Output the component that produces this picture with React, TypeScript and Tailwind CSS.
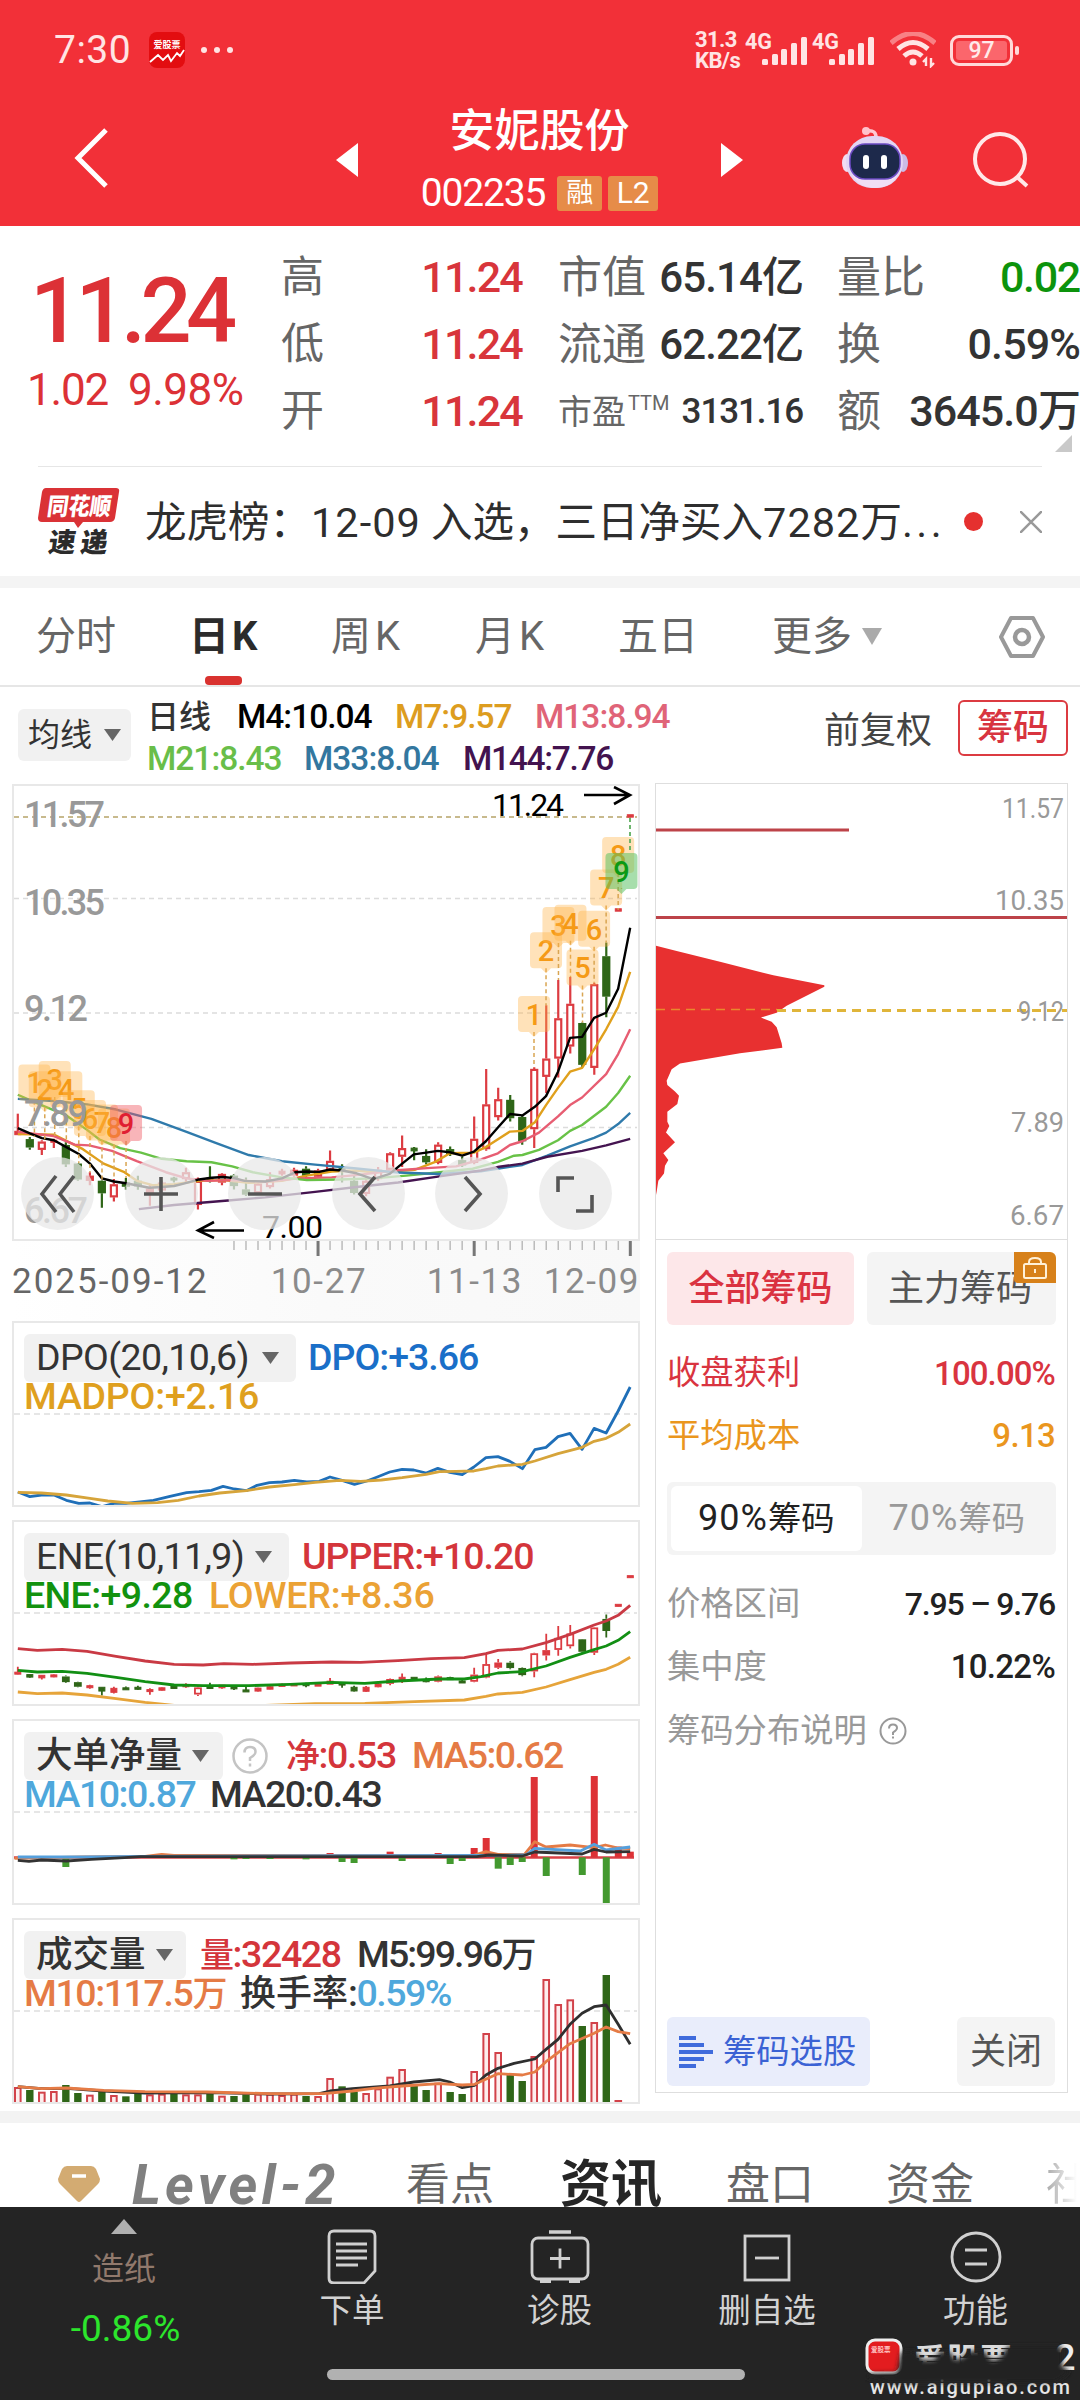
import { useState } from "react";
import type { ReactNode } from "react";

type Kind = "r" | "g";
// high, body top, body bottom, low, direction
type Candle = [number, number, number, number, Kind];

const RED = "#dc3b41";
const GREEN = "#2f6618";

const candles: Candle[] = [
  [995, 1046, 1056, 1056, "r"],
  [1063, 1069, 1093, 1100, "g"],
  [1072, 1076, 1100, 1115, "r"],
  [1068, 1072, 1078, 1095, "r"],
  [1078, 1086, 1142, 1150, "g"],
  [1138, 1140, 1186, 1190, "g"],
  [1165, 1175, 1190, 1203, "r"],
  [1188, 1190, 1226, 1268, "g"],
  [1185, 1200, 1238, 1250, "r"],
  [1182, 1195, 1207, 1216, "g"],
  [1175, 1190, 1206, 1216, "g"],
  [1200, 1212, 1228, 1262, "r"],
  [1190, 1195, 1218, 1222, "r"],
  [1178, 1182, 1186, 1195, "g"],
  [1152, 1165, 1185, 1195, "r"],
  [1180, 1190, 1260, 1273, "r"],
  [1148, 1182, 1186, 1195, "g"],
  [1168, 1170, 1195, 1203, "r"],
  [1170, 1175, 1205, 1215, "g"],
  [1180, 1215, 1230, 1234, "g"],
  [1195, 1198, 1226, 1230, "r"],
  [1165, 1185, 1208, 1212, "r"],
  [1155, 1162, 1170, 1175, "r"],
  [1152, 1158, 1175, 1178, "r"],
  [1148, 1155, 1175, 1190, "g"],
  [1155, 1160, 1178, 1180, "r"],
  [1102, 1132, 1160, 1162, "r"],
  [1142, 1150, 1158, 1195, "g"],
  [1175, 1190, 1225, 1230, "g"],
  [1178, 1190, 1228, 1235, "r"],
  [1150, 1158, 1185, 1190, "r"],
  [1107, 1110, 1158, 1170, "r"],
  [1058, 1095, 1120, 1150, "r"],
  [1092, 1095, 1103, 1130, "g"],
  [1098, 1118, 1136, 1142, "g"],
  [1078, 1085, 1138, 1142, "r"],
  [1090, 1098, 1112, 1118, "g"],
  [1120, 1130, 1145, 1150, "g"],
  [1003, 1068, 1138, 1142, "r"],
  [865, 968, 1098, 1103, "r"],
  [920, 953, 1005, 1015, "r"],
  [941, 955, 1008, 1018, "g"],
  [1000, 1005, 1075, 1085, "g"],
  [860, 865, 1040, 1095, "r"],
  [680, 835, 888, 935, "r"],
  [607, 718, 835, 890, "r"],
  [598, 676, 800, 820, "r"],
  [730, 732, 853, 860, "g"],
  [615, 619, 862, 882, "r"],
  [498, 538, 655, 715, "g"],
  [400, 400, 407, 407, "r"],
  [127, 127, 134, 134, "r"],
];

const maLines = [
  {
    color: "#e0a01c",
    points:
      "43,1054 130,1056 200,1098 250,1140 300,1165 330,1190 370,1203 420,1200 480,1190 540,1188 600,1196 680,1190 740,1175 800,1163 860,1160 900,1165 950,1162 1000,1158 1050,1135 1085,1110 1143,1108 1172,1092 1230,1047 1260,1045 1290,1020 1317,970 1346,920 1375,873 1404,862 1433,808 1462,750 1491,685 1520,583",
  },
  {
    color: "#e75d72",
    points:
      "43,1048 130,1060 180,1085 215,1087 270,1103 330,1133 400,1165 450,1183 500,1190 560,1188 640,1193 720,1183 800,1180 870,1172 950,1160 1030,1153 1100,1148 1160,1128 1201,1110 1230,1086 1260,1075 1300,1050 1346,1003 1375,970 1404,948 1462,880 1491,822 1520,750",
  },
  {
    color: "#68c247",
    points:
      "43,940 100,970 160,1000 210,1042 240,1070 290,1095 340,1108 390,1126 450,1133 510,1136 560,1148 610,1165 680,1180 740,1188 820,1186 900,1183 980,1175 1060,1165 1140,1155 1201,1135 1240,1117 1260,1115 1300,1100 1346,1072 1375,1045 1404,1028 1462,975 1491,935 1520,885",
  },
  {
    color: "#2f7aab",
    points:
      "43,952 130,958 210,968 280,983 365,1010 450,1048 520,1080 600,1115 680,1133 760,1143 860,1154 960,1166 1060,1170 1160,1162 1260,1144 1320,1117 1375,1090 1433,1065 1462,1050 1491,1025 1520,993",
  },
  {
    color: "#441450",
    points:
      "335,1272 420,1260 550,1247 640,1238 760,1222 860,1208 960,1195 1060,1177 1160,1160 1200,1150 1260,1140 1320,1120 1404,1103 1462,1087 1520,1068",
  },
  {
    color: "#000000",
    points:
      "43,1037 72,1052 101,1066 130,1072 160,1092 190,1112 217,1140 246,1183 275,1192 304,1197 360,1210 390,1208 420,1205 450,1196 480,1186 510,1181 538,1179 565,1182 590,1190 640,1192 680,1183 712,1165 740,1163 770,1164 796,1157 825,1160 860,1168 900,1185 940,1170 970,1140 998,1113 1028,1108 1056,1103 1085,1107 1115,1117 1143,1105 1172,1075 1201,1035 1230,996 1260,1000 1290,975 1317,944 1346,873 1375,775 1404,772 1433,717 1462,702 1491,632 1520,455",
  },
];

// label, box centre x, box top, bottom of the dashed stem
const leftMarks: [string, number, number, number][] = [
  ["1", 83, 852, 1063],
  ["2", 108, 872, 1072],
  ["3", 132, 842, 1068],
  ["4", 160, 872, 1078],
  ["5", 190, 927, 1138],
  ["6", 217, 955, 1165],
  ["7", 246, 968, 1188],
  ["8", 275, 980, 1185],
];
const rightMarks: [string, number, number, number][] = [
  ["1", 1288, 653, 860],
  ["2", 1317, 468, 680],
  ["3", 1347, 395, 607],
  ["4", 1376, 388, 598],
  ["5", 1405, 518, 730],
  ["6", 1433, 406, 615],
  ["7", 1462, 286, 498],
  ["8", 1491, 192, 403],
];

const volumes: [number, Kind][] = [
  [1158, "r"], [1167, "g"], [1172, "r"], [1170, "r"], [1152, "g"], [1176, "g"], [1181, "r"],
  [1170, "g"], [1182, "r"], [1186, "g"], [1178, "g"], [1180, "r"], [1178, "r"], [1178, "g"],
  [1180, "r"], [1180, "r"], [1170, "g"], [1184, "r"], [1185, "g"], [1180, "g"], [1178, "r"],
  [1178, "r"], [1182, "r"], [1178, "r"], [1185, "g"], [1185, "r"], [1131, "r"], [1156, "g"],
  [1172, "g"], [1176, "r"], [1162, "r"], [1127, "r"], [1104, "r"], [1152, "g"], [1167, "g"],
  [1145, "r"], [1173, "g"], [1179, "g"], [1110, "r"], [996, "r"], [1053, "r"], [1122, "g"],
  [1140, "g"], [1065, "r"], [834, "r"], [909, "r"], [895, "r"], [975, "g"], [963, "r"],
  [822, "g"], [1197, "r"], [1206, "r"],
];

const netBars: [number, number][] = [
  [4, 498], [18, 475], [19, 474], [21, 474], [24, 475], [26, 456], [27, 483], [28, 486], [31, 452],
  [32, 480], [35, 456], [36, 489], [37, 480], [38, 441], [39, 411], [40, 503], [41, 492], [42, 483],
  [43, 228], [44, 525], [47, 522], [48, 225], [49, 611], [50, 437], [51, 452],
];

const barX = (i: number) => 17.8 + i * 12.01;
const priceX = (u: number) => u / 2.412;
const priceY = (v: number) => 770 + v * 0.3444;

function Line({ points, color, width = 2.8 }: { points: string; color: string; width?: number }) {
  return (
    <polyline
      points={points}
      fill="none"
      stroke={color}
      strokeWidth={width}
      strokeLinejoin="round"
      vectorEffect="non-scaling-stroke"
    />
  );
}

function Candles({ toY, stroke = 2.2 }: { toY: (v: number) => number; stroke?: number }) {
  return (
    <g>
      {candles.map(([hi, top, bottom, lo, kind], i) => {
        const color = kind === "r" ? RED : GREEN;
        const x = barX(i);
        const y1 = toY(top);
        const h = Math.max(toY(bottom) - y1, 2);
        return (
          <g key={i} stroke={color} strokeWidth={stroke}>
            <path d={`M${x} ${toY(hi)}V${y1}M${x} ${y1 + h}V${toY(lo)}`} />
            <rect
              x={x - 3}
              y={y1 + (h > 4 ? 1 : 0)}
              width={6}
              height={h > 4 ? h - 2 : h}
              fill={kind === "r" && h > 6 ? "#ffffff" : color}
              strokeWidth={h > 4 ? stroke : 1}
            />
          </g>
        );
      })}
    </g>
  );
}

function Mark({
  mark,
  fill = "rgba(255,178,72,0.38)",
  color = "#f59a16",
}: {
  mark: [string, number, number, number];
  fill?: string;
  color?: string;
}) {
  const [label, u, v, stem] = mark;
  const x = priceX(u);
  const y = priceY(v);
  return (
    <g>
      <path d={`M${x} ${y + 36}V${priceY(stem)}`} stroke="#d9a552" strokeDasharray="4 3" strokeWidth="1.5" />
      <path
        d={`M${x - 12} ${y}h24q4 0 4 4v28q0 4 -4 4h-7l-5 5l-5 -5h-7q-4 0 -4 -4v-28q0 -4 4 -4z`}
        fill={fill}
      />
      <text x={x} y={y + 29} fontSize="29" fontWeight="500" fill={color} textAnchor="middle">
        {label}
      </text>
    </g>
  );
}

function Caret({ className }: { className: string }) {
  return (
    <svg viewBox="0 0 16 12" preserveAspectRatio="none" className={className} fill="currentColor">
      <path d="M0 0H16L8 12Z" />
    </svg>
  );
}

function StatusBar() {
  return (
    <div className="flex h-[100px] items-center pl-[54px] pr-[60px] text-[#ffe4e4]">
      <span className="w-[95px] text-[39px] leading-none tracking-[0.5px]">7:30</span>
      <svg viewBox="0 0 36 36" className="h-9 w-9">
        <rect width="36" height="36" rx="8" fill="#e30d10" />
        <text x="18" y="16" fontSize="9" fontWeight="700" fill="#fff" textAnchor="middle">
          爱股票
        </text>
        <path d="M1 30L9 23L14 28L19 23L22 29L28 21L31 24L35 18" fill="none" stroke="#fff" strokeWidth="1.8" />
      </svg>
      <svg viewBox="0 0 32 6" className="ml-4 h-[6px] w-8" fill="currentColor">
        <circle cx="3" cy="3" r="3" />
        <circle cx="16" cy="3" r="3" />
        <circle cx="29" cy="3" r="3" />
      </svg>
      <div className="ml-auto flex items-center">
        <div className="w-[50px] text-[22px] font-bold leading-[21px] tracking-[-0.6px]">
          <div>31.3</div>
          <div>KB/s</div>
        </div>
        <Signal />
        <Signal />
        <svg viewBox="0 0 46 36" className="ml-[11px] h-9 w-[46px]" fill="none" stroke="currentColor">
          <path d="M1 11Q23 -8 45 11" strokeWidth="5" opacity="0.45" />
          <path d="M8 17Q23 4 38 17" strokeWidth="5" />
          <path d="M14 24Q23 16 32 24" strokeWidth="5" />
          <circle cx="23" cy="30" r="3.5" fill="currentColor" stroke="none" />
          <path d="M36 34V27L33 30M41 26V34L44 31" strokeWidth="2.4" />
        </svg>
        <div className="relative ml-[14px] mr-[7px] h-[31px] w-[63px] rounded-[9px] border-[3px] border-[#ffd9d9] p-[3px]">
          <div className="flex h-full w-full items-center justify-center rounded-[3px] bg-[#fb666c] text-[23px] font-medium leading-none text-[#ffeaea]">
            97
          </div>
          <div className="absolute -right-[9px] top-[8px] h-[9px] w-[4px] rounded-full bg-[#ffd9d9]" />
        </div>
      </div>
    </div>
  );
}

function Signal() {
  return (
    <svg viewBox="0 0 67 36" className="h-9 w-[67px]" fill="currentColor">
      <text x="0" y="17" fontSize="22" fontWeight="700" textLength="27" lengthAdjust="spacingAndGlyphs">
        4G
      </text>
      <rect x="17" y="27" width="6" height="6" rx="1.5" />
      <rect x="27" y="22" width="6" height="11" rx="1.5" />
      <rect x="36" y="17" width="6" height="16" rx="1.5" />
      <rect x="46" y="11" width="6" height="22" rx="1.5" />
      <rect x="56" y="5" width="6" height="28" rx="1.5" />
    </svg>
  );
}

function Robot() {
  return (
    <svg viewBox="0 0 66 62" className="h-[62px] w-[66px]">
      <path d="M24 4Q35 2 34 12" fill="none" stroke="#ffc9d2" strokeWidth="3.5" />
      <circle cx="24" cy="4" r="4" fill="#ffc2cc" />
      <ellipse cx="5" cy="36" rx="5" ry="9" fill="#f1ddf2" />
      <ellipse cx="61" cy="36" rx="5" ry="9" fill="#cbbbe6" />
      <rect x="4" y="9" width="57" height="52" rx="26" fill="#e3d5f3" />
      <path d="M10 46Q14 60 33 61Q52 60 56 46Z" fill="#f0def5" />
      <rect x="8" y="17" width="50" height="35" rx="15" fill="#1d294b" stroke="#6b4ac2" strokeWidth="1.5" />
      <rect x="21" y="28" width="6" height="14" rx="3" fill="#fff" />
      <rect x="39" y="28" width="6" height="14" rx="3" fill="#fff" />
    </svg>
  );
}

function Header() {
  return (
    <header className="h-[226px] bg-[#f23038] text-white">
      <StatusBar />
      <div className="flex h-[126px] items-start">
        <svg viewBox="0 0 34 60" className="ml-[74px] mt-[28px] h-[60px] w-[34px]" fill="none" stroke="#fff" strokeWidth="5">
          <path d="M32 2L4 30L32 58" />
        </svg>
        <svg viewBox="0 0 22 34" className="ml-[228px] mt-[43px] h-[34px] w-[22px]" fill="#fff">
          <path d="M22 0V34L0 17Z" />
        </svg>
        <div className="flex w-[363px] flex-col items-center">
          <h1 className="mt-[6px] text-[45px] font-medium leading-[52px]">安妮股份</h1>
          <div className="mt-[17px] flex h-[36px] items-center">
            <span className="mr-[12px] text-[39px] leading-none tracking-[-1.2px]">002235</span>
            <span className="flex h-[35px] w-[45px] items-center justify-center rounded-[3px] bg-[#e68c48] text-[27px] leading-none">
              融
            </span>
            <span className="ml-[6px] flex h-[35px] w-[50px] items-center justify-center rounded-[3px] bg-[#e68c48] text-[30px] leading-none">
              L2
            </span>
          </div>
        </div>
        <svg viewBox="0 0 22 34" className="mt-[43px] h-[34px] w-[22px]" fill="#fff">
          <path d="M0 0V34L22 17Z" />
        </svg>
        <div className="ml-[99px] mt-[27px]">
          <Robot />
        </div>
        <svg viewBox="0 0 56 56" className="ml-[65px] mt-[32px] h-14 w-14" fill="none" stroke="#ffe9e9" strokeWidth="4">
          <circle cx="27" cy="27" r="25" />
          <path d="M44 45L54 54" />
        </svg>
      </div>
    </header>
  );
}

function Quote() {
  const rows = [
    ["高", "11.24", "市值", "65.14亿", "量比", "0.02"],
    ["低", "11.24", "流通", "62.22亿", "换", "0.59%"],
    ["开", "11.24", "市盈", "3131.16", "额", "3645.0万"],
  ];
  return (
    <section className="relative flex h-[240px] bg-white">
      <div className="w-[281px] text-[#dc3136]">
        <div className="mt-[41px] pl-[30px] text-[90px] font-medium leading-[90px] tracking-[-5.6px]">11.24</div>
        <div className="mt-[9px] flex pl-[27px] text-[44px] leading-[48px] tracking-[-1.2px]">
          <span className="w-[101px]">1.02</span>
          <span className="tracking-[-0.5px]">9.98%</span>
        </div>
      </div>
      <div className="mt-[18px] flex-1">
        {rows.map(([a, av, b, bv, c, cv], i) => (
          <div key={a} className="flex h-[67px] items-center leading-none text-[#666]">
            <span className="w-[43px] text-[43px]">{a}</span>
            <span className="w-[198px] text-right text-[43px] font-medium tracking-[-1.8px] text-[#d8353b]">{av}</span>
            {i === 2 ? (
              <span className="ml-[36px] flex text-[34px]">
                {b}
                <span className="-mt-[2px] ml-[2px] text-[20px]">TTM</span>
              </span>
            ) : (
              <span className="ml-[36px] text-[44px]">{b}</span>
            )}
            <span
              className={
                i === 2
                  ? "ml-auto text-[35px] font-medium tracking-[-1.1px] text-[#333]"
                  : "ml-auto text-[42px] font-medium tracking-[-0.9px] text-[#333]"
              }
            >
              {bv}
            </span>
            <div className="ml-[34px] flex w-[243px] shrink-0 items-center justify-between whitespace-nowrap">
              <span className="text-[44px]">{c}</span>
              <span
                className={
                  i === 0
                    ? "text-[43px] font-medium tracking-[-1.3px] text-[#0c930c]"
                    : "text-[43px] font-medium tracking-[-0.9px] text-[#333]"
                }
              >
                {cv}
              </span>
            </div>
          </div>
        ))}
      </div>
      <svg viewBox="0 0 17 17" className="absolute bottom-[14px] right-[8px] h-[17px] w-[17px]" fill="#c9c9c9">
        <path d="M17 0V17H0Z" />
      </svg>
    </section>
  );
}

function News() {
  return (
    <section className="bg-white">
      <div className="mx-[38px] h-px bg-[#e6e6e6]" />
      <div className="flex h-[109px] items-center pl-[38px]">
        <svg viewBox="0 0 82 68" className="mt-[1px] h-[68px] w-[82px]">
          <path d="M8 0H78Q82 0 81 4L77 30Q76 34 72 34H45L40 40L36 34H4Q0 34 0 30L4 4Q5 0 8 0Z" fill="#da3236" />
          <g transform="skewX(-8)" fontWeight="900" textAnchor="middle">
            <text x="44" y="27" fontSize="24" fill="#fff" textLength="64" lengthAdjust="spacingAndGlyphs">
              同花顺
            </text>
            <text x="48" y="64" fontSize="27" fill="#2b2b2b" textLength="59">
              速递
            </text>
          </g>
        </svg>
        <span className="ml-[25px] mt-[2px] w-[810px] whitespace-nowrap text-[41.5px] leading-none text-[#2e2e2e]">
          龙虎榜：<span className="tracking-[1px]">12-09</span> 入选，三日净买入
          <span className="tracking-[1px]">7282</span>万<span className="tracking-[3.5px]">...</span>
        </span>
        <span className="ml-[9px] h-[19px] w-[19px] rounded-full bg-[#e5302f]" />
        <svg viewBox="0 0 22 22" className="ml-[37px] h-[22px] w-[22px]" stroke="#999" strokeWidth="2.5">
          <path d="M0 0L22 22M22 0L0 22" />
        </svg>
      </div>
    </section>
  );
}

const periods = [
  { label: "分时", box: "ml-[36px] w-[153px]" },
  { label: "日K", box: "w-[142px] tracking-[3px]" },
  { label: "周K", box: "w-[144px] tracking-[4px]" },
  { label: "月K", box: "w-[143px] tracking-[4px]" },
  { label: "五日", box: "w-[154px]" },
  { label: "更多", box: "w-[90px]" },
];

function PeriodTabs() {
  const [active, setActive] = useState("日K");
  return (
    <nav className="relative flex h-[99px] items-center border-b-2 border-[#e6e6e6] bg-white">
      {periods.map((p) => (
        <button
          key={p.label}
          onClick={() => setActive(p.label)}
          className={`${p.box} relative flex h-full items-center text-[40px] leading-none ${
            active === p.label ? "font-bold text-[#2b2b2b]" : "text-[#666]"
          }`}
        >
          {p.label}
          {active === p.label && (
            <span className="absolute bottom-0 left-[16px] h-[9px] w-[37px] rounded-[4px] bg-[#d9322f]" />
          )}
        </button>
      ))}
      <Caret className="h-[17px] w-[20px] text-[#aaa]" />
      <svg viewBox="0 0 46 44" className="ml-auto mr-[35px] h-11 w-[46px]" fill="none" stroke="#999" strokeWidth="4" strokeLinejoin="round">
        <path d="M12 3H34L44 22L34 41H12L2 22Z" />
        <circle cx="23" cy="22" r="7" strokeWidth="4.5" />
      </svg>
    </nav>
  );
}

function AverageLegend() {
  return (
    <div className="flex h-[96px] items-center bg-white pl-[18px] pr-[12px]">
      <div className="flex h-[52px] w-[113px] items-center justify-center gap-[12px] rounded-md bg-[#f1f1f1] text-[32px] leading-none text-[#333]">
        均线
        <Caret className="h-[12px] w-[17px] text-[#666]" />
      </div>
      <div className="ml-[16px] mt-[5px] flex flex-col text-[33.500px] font-medium leading-[42px] tracking-[-1px]">
        <div className="flex h-[42px] items-center">
          <span className="w-[90px] text-[32px] font-medium tracking-normal text-[#333]">日线</span>
          <span className="w-[158px] text-black">M4:10.04</span>
          <span className="w-[140px] text-[#dd9d1f]">M7:9.57</span>
          <span className="text-[#e06478]">M13:8.94</span>
        </div>
        <div className="flex h-[42px] items-center">
          <span className="w-[157px] text-[#69be49]">M21:8.43</span>
          <span className="w-[159px] text-[#33779f]">M33:8.04</span>
          <span className="tracking-[-1.3px] text-[#43134f]">M144:7.76</span>
        </div>
      </div>
      <span className="mb-[8px] ml-auto text-[36px] leading-none text-[#444]">前复权</span>
      <span className="mb-[14px] ml-[26px] flex h-[56px] w-[110px] items-center justify-center rounded-md border-2 border-[#dc3b41] text-[36px] font-medium leading-none text-[#d8343f]">
        筹码
      </span>
    </div>
  );
}

function RoundButton({ children }: { children: ReactNode }) {
  return (
    <button className="flex h-[73px] w-[73px] items-center justify-center rounded-full bg-[#e8e8e8]/75">
      <svg viewBox="0 0 40 40" className="h-10 w-10" fill="none" stroke="#555" strokeWidth="3.6">
        {children}
      </svg>
    </button>
  );
}

function PriceChart() {
  const axis = [
    { label: "11.57", y: 826, w: 78 },
    { label: "10.35", y: 914, w: 78 },
    { label: "9.12", y: 1020, w: 61 },
    { label: "7.89", y: 1125, w: 61 },
    { label: "6.67", y: 1222, w: 61 },
  ];
  return (
    <div className="relative h-[457px] border-2 border-[#e8e8e8] bg-white">
      <svg viewBox="14 785 624 453" preserveAspectRatio="none" className="absolute inset-0 h-full w-full">
        <g strokeDasharray="5 4" stroke="#dcdcdc" strokeWidth="1.5">
          <path d="M14 897.5H637M14 1012H637M14 1126.5H637" />
          <path d="M14 816H637" stroke="#b7a468" />
        </g>
        <Candles toY={priceY} />
        <g transform="translate(0 770) scale(0.41459 0.3444)">
          {maLines.map((l) => (
            <Line key={l.color} points={l.points} color={l.color} width={2.4} />
          ))}
        </g>
        {leftMarks.map((m) => (
          <Mark key={m[0]} mark={m} />
        ))}
        <Mark mark={["9", 304, 970, 1182]} fill="rgba(240,90,100,0.45)" color="#e01f32" />
        {rightMarks.map((m) => (
          <Mark key={m[0]} mark={m} />
        ))}
        <path d="M630 817V850" stroke="#5fae5f" strokeWidth="1.8" strokeDasharray="4 3" />
        <Mark mark={["9", 1499, 238, 340]} fill="rgba(80,190,90,0.5)" color="#0b9a14" />
        <g fontSize="36" fontWeight="500" fill="#999">
          {axis.map((a) => (
            <text key={a.label} x="24" y={a.y} textLength={a.w + 3}>
              {a.label}
            </text>
          ))}
        </g>
        <g fill="none" stroke="#000" strokeWidth="2.6">
          <path d="M584 794H630M614 786L630 794L614 803" />
          <path d="M244 1229.5H198M214 1221L198 1229.5L214 1237" />
        </g>
        <g fontSize="32" fill="#000">
          <text x="492" y="815" textLength="72">
            11.24
          </text>
          <text x="262" y="1237" textLength="61">
            7.00
          </text>
        </g>
      </svg>
      <div className="absolute bottom-[9px] left-[7px] flex gap-[30.5px]">
        <RoundButton>
          <path d="M18 2L4 20L18 38M36 2L22 20L36 38" />
        </RoundButton>
        <RoundButton>
          <path d="M3 20H37M20 3V37" />
        </RoundButton>
        <RoundButton>
          <path d="M3 20H37" />
        </RoundButton>
        <RoundButton>
          <path d="M27 3L12 20L27 37" />
        </RoundButton>
        <RoundButton>
          <path d="M13 3L28 20L13 37" />
        </RoundButton>
        <RoundButton>
          <path d="M3 18V4H19M21 37H37V21" />
        </RoundButton>
      </div>
    </div>
  );
}

function DateAxis() {
  return (
    <div className="h-[80px] bg-linear-to-r from-white via-[#fafafa] to-[#f8f8f8]">
      <svg viewBox="12 1241 628 17" className="h-[17px] w-[628px]">
        {Array.from({ length: 34 }, (_, k) => 18 + k).map((i) => {
          const major = i === 25 || i === 38 || i === 51;
          return (
            <path
              key={i}
              d={`M${barX(i)} 1241V${major ? 1256 : 1250}`}
              stroke={major ? "#777" : "#bbb"}
              strokeWidth={major ? 3 : 1.5}
            />
          );
        })}
      </svg>
      <div className="flex whitespace-nowrap text-[35px] leading-[48px] tracking-[1.6px] text-[#8b8b8b]">
        <span className="w-[259px] tracking-[2px] text-[#666]">2025-09-12</span>
        <span className="w-[156px]">10-27</span>
        <span className="w-[117px]">11-13</span>
        <span>12-09</span>
      </div>
    </div>
  );
}

function SubChart({
  top,
  last = false,
  chart,
  children,
}: {
  top: number;
  last?: boolean;
  chart: ReactNode;
  children: ReactNode;
}) {
  return (
    <div className={`relative h-[186px] border-2 border-[#e8e8e8] bg-white ${last ? "" : "mb-[13px]"}`}>
      <svg viewBox={`14 ${top} 624 182`} preserveAspectRatio="none" className="absolute inset-0 h-full w-full">
        <path d={`M14 ${top + 91}H637`} stroke="#dedede" strokeWidth="1.5" strokeDasharray="6 4" />
        {chart}
      </svg>
      <div className="relative pl-[10px] pt-[11px] text-[37.5px] font-medium leading-none tracking-[-1px]">
        {children}
      </div>
    </div>
  );
}

function Picker({ className, children }: { className: string; children: ReactNode }) {
  return (
    <span className={`${className} flex h-[48px] shrink-0 items-center gap-[10px] rounded-md bg-[#f1f1f1] pl-[12px] text-[#333]`}>
      {children}
      <Caret className="h-[12px] w-[17px] text-[#666]" />
    </span>
  );
}

function Indicators() {
  return (
    <>
      <SubChart
        top={1322}
        chart={
          <g transform="translate(0 1310) scale(0.41459 0.33333)">
            <Line
              color="#1f6fb8"
              points="43,543 72,557 100,552 130,552 160,568 190,577 217,576 246,587 275,577 304,577 370,568 410,556 450,545 480,542 510,538 538,526 565,534 594,539 620,523 650,515 680,513 710,508 740,513 770,511 796,498 825,508 855,520 885,510 910,498 940,483 970,475 998,477 1028,486 1056,472 1085,484 1115,491 1143,468 1172,440 1201,437 1230,451 1260,473 1290,416 1317,409 1346,377 1375,367 1404,415 1433,352 1462,366 1491,300 1520,228"
            />
            <Line
              color="#d6a43a"
              points="43,544 100,546 160,552 217,562 260,570 320,577 380,575 430,568 480,555 530,546 594,539 650,528 710,521 760,514 820,508 870,511 920,507 970,500 1028,490 1060,482 1100,481 1143,480 1172,473 1201,465 1260,460 1290,450 1346,428 1404,409 1433,391 1462,382 1491,364 1520,339"
            />
          </g>
        }
      >
        <div className="flex h-[48px] items-center">
          <Picker className="w-[272px]">
            <span className="w-[216px] font-normal tracking-[-0.6px]">DPO(20,10,6)</span>
          </Picker>
          <span className="ml-[12px] text-[#1a6fc8]">DPO:+3.66</span>
        </div>
        <div className="flex h-[29px] items-center text-[#dfa01f]">
          <span className="tracking-[-0.2px]">MADPO:+2.16</span>
        </div>
      </SubChart>

      <SubChart
        top={1521}
        chart={
          <>
            <Candles toY={(v) => 1310 + (754 + 0.315 * v) / 3} stroke={1.8} />
            <g transform="translate(0 1310) scale(0.41459 0.33333)">
              <Line
                color="#c93a44"
                points="43,1013 90,1018 150,1015 210,1021 280,1036 350,1050 420,1060 490,1062 540,1058 610,1060 700,1056 800,1053 870,1054 960,1049 1040,1043 1120,1040 1172,1028 1201,1018 1260,1014 1317,995 1375,970 1433,942 1462,930 1491,913 1520,883"
              />
              <Line
                color="#128f14"
                points="43,1078 90,1083 150,1081 210,1087 280,1099 350,1112 420,1122 490,1124 600,1124 700,1120 800,1114 880,1117 960,1110 1060,1104 1120,1104 1160,1097 1201,1086 1260,1082 1317,1065 1375,1039 1433,1016 1462,1005 1491,988 1520,962"
              />
              <Line
                color="#e6a43a"
                points="43,1143 90,1148 150,1146 210,1152 280,1163 350,1174 420,1183 520,1184 640,1183 760,1178 880,1177 1000,1172 1120,1167 1172,1156 1201,1149 1260,1144 1317,1128 1375,1106 1433,1084 1462,1075 1491,1060 1520,1039"
              />
            </g>
          </>
        }
      >
        <div className="flex h-[48px] items-center">
          <Picker className="w-[265px]">
            <span className="w-[209px] font-normal tracking-[-0.6px]">ENE(10,11,9)</span>
          </Picker>
          <span className="ml-[13px] text-[#d4353b]">UPPER:+10.20</span>
        </div>
        <div className="flex h-[29px] items-center">
          <span className="w-[185px] tracking-[-0.6px] text-[#12920f]">ENE:+9.28</span>
          <span className="tracking-[-0.2px] text-[#eba235]">LOWER:+8.36</span>
        </div>
      </SubChart>

      <SubChart
        top={1720}
        chart={
          <>
            <path d="M14 1856.5H634" stroke="#d94046" strokeWidth="2.5" />
            {netBars.map(([i, v]) => (
              <rect
                key={i}
                x={barX(i) - 3.5}
                y={1700 + Math.min(v, 469) / 3}
                width="7"
                height={Math.abs(v - 469) / 3}
                fill={v < 469 ? "#dd3236" : "#43992f"}
              />
            ))}
            <g transform="translate(0 1700) scale(0.41459 0.33333)">
              <Line
                color="#e57b45"
                points="35,472 200,468 350,466 390,460 420,463 1140,464 1172,452 1201,460 1265,460 1290,422 1317,438 1375,432 1433,440 1460,432 1491,441 1520,443"
              />
              <Line
                color="#559fdc"
                points="43,468 200,468 350,466 1200,463 1270,461 1290,442 1400,450 1433,430 1462,447 1520,438"
              />
              <Line
                color="#333"
                points="43,478 70,481 100,477 160,480 220,475 300,470 340,467 500,467 1150,467 1180,462 1260,465 1290,453 1404,459 1433,445 1462,453 1520,452"
              />
            </g>
          </>
        }
      >
        <div className="flex h-[48px] items-center">
          <Picker className="w-[199px]">
            <span className="text-[36.5px] font-medium tracking-normal">大单净量</span>
          </Picker>
          <svg viewBox="0 0 36 36" className="ml-[9px] h-9 w-9" fill="none" stroke="#c4c4c4" strokeWidth="2.5">
            <circle cx="18" cy="18" r="16.5" />
            <path d="M12.5 14.5Q12.5 9 18 9Q23.5 9 23.5 14Q23.5 17 18 20V23M18 25.5V28.5" />
          </svg>
          <span className="ml-[18px] w-[126px] tracking-[-1.4px] text-[#d4353b]">
            <span className="text-[34px] font-medium">净</span>:0.53
          </span>
          <span className="tracking-[-1.6px] text-[#e57b45]">MA5:0.62</span>
        </div>
        <div className="flex h-[29px] items-center">
          <span className="w-[186px] tracking-[-1.5px] text-[#4fa8dc]">MA10:0.87</span>
          <span className="tracking-[-1.5px] text-[#333]">MA20:0.43</span>
        </div>
      </SubChart>

      <SubChart
        top={1919}
        last
        chart={
          <>
            {volumes.map(([v, kind], i) => (
              <rect
                key={i}
                x={barX(i) - (kind === "r" ? 2.8 : 3.7)}
                y={1700 + v / 3 + (kind === "r" ? 1 : 0)}
                width={kind === "r" ? 5.6 : 7.4}
                height={Math.max((1211 - v) / 3 - 1, 1)}
                fill={kind === "r" ? "#fdeeee" : GREEN}
                stroke={kind === "r" ? "#d2424a" : "none"}
                strokeWidth="2"
              />
            ))}
            <g transform="translate(0 1700) scale(0.41459 0.33333)">
              <Line
                color="#2f2f2f"
                points="43,1157 100,1163 160,1162 250,1170 350,1176 500,1175 650,1179 770,1178 796,1170 850,1163 940,1155 998,1143 1060,1136 1085,1143 1115,1160 1145,1153 1172,1122 1201,1102 1240,1087 1290,1074 1317,1045 1346,1015 1375,970 1404,937 1433,917 1462,912 1491,970 1520,1030"
              />
              <Line
                color="#e57b45"
                points="43,1157 100,1163 160,1161 250,1168 350,1172 500,1173 650,1178 780,1178 850,1170 900,1162 970,1155 1060,1148 1115,1152 1145,1150 1201,1118 1260,1122 1290,1113 1317,1082 1346,1055 1375,1028 1433,997 1462,978 1491,992 1520,998"
              />
            </g>
          </>
        }
      >
        <div className="flex h-[48px] items-center">
          <Picker className="w-[162px]">
            <span className="text-[36.5px] font-medium tracking-normal">成交量</span>
          </Picker>
          <span className="ml-[14px] w-[157px] tracking-[-1.4px] text-[#d4353b]">
            <span className="text-[34px] font-medium">量</span>:32428
          </span>
          <span className="tracking-[-1.9px] text-[#333]">
            M5:99.96<span className="text-[35px]">万</span>
          </span>
        </div>
        <div className="flex h-[29px] items-center">
          <span className="w-[216px] tracking-[-1.4px] text-[#e57b45]">
            M10:117.5<span className="text-[35px]">万</span>
          </span>
          <span className="tracking-[-1.5px] text-[#333]">
            <span className="text-[36px] font-medium tracking-normal">换手率</span>:
            <span className="text-[#4fa8dc]">0.59%</span>
          </span>
        </div>
      </SubChart>
    </>
  );
}

function ChipPanel() {
  const [range, setRange] = useState(90);
  const axis = [
    { label: "11.57", y: 818, w: 62 },
    { label: "10.35", y: 910, w: 69 },
    { label: "9.12", y: 1021, w: 46 },
    { label: "7.89", y: 1132, w: 53 },
    { label: "6.67", y: 1225, w: 54 },
  ];
  return (
    <aside className="flex h-[1310px] w-[413px] flex-col border border-[#dedede] bg-white text-[33.3px] leading-none">
      <svg viewBox="656 784 411 455" className="h-[455px] w-[411px]">
        <path d="M656 830H849" stroke="#bd4349" strokeWidth="3" />
        <path d="M656 917.5H1067" stroke="#bd4349" strokeWidth="3" />
        <g transform="translate(640 770) scale(0.33333 0.35714)">
          <path
            d="M48 492L110 507L240 537L400 575L553 603L553 607L440 660L410 680L363 693L395 705L410 720L425 765L427 778L300 793L120 822L95 838L80 870L82 882L105 900L117 912L112 935L82 957L82 985L88 997L78 1015L105 1042L70 1073L85 1092L75 1108L72 1130L55 1150L50 1180L48 1190Z"
            fill="#e83030"
          />
        </g>
        <path d="M656 1009.5H777" stroke="#e88a2c" strokeWidth="1.5" strokeDasharray="9 6" />
        <path d="M777 1010.5H1067" stroke="#e0b53a" strokeWidth="3" strokeDasharray="9 6" />
        <g fontSize="28.5" fill="#999">
          {axis.map((a) => (
            <text key={a.label} x={1064 - a.w} y={a.y} textLength={a.w} lengthAdjust="spacingAndGlyphs">
              {a.label}
            </text>
          ))}
        </g>
      </svg>
      <div className="h-px bg-[#dedede]" />
      <div className="flex gap-[13px] pl-[11px] pt-[12px] text-[36px]">
        <div className="flex h-[73px] w-[187px] items-center justify-center rounded-md bg-[#fde7e9] font-medium text-[#da3240]">
          全部筹码
        </div>
        <div className="relative flex h-[73px] w-[189px] items-center justify-center rounded-md bg-[#f4f4f4] pr-[3px] text-[#555]">
          主力筹码
          <div className="absolute right-0 top-0 flex h-[31px] w-[42px] items-center justify-center rounded-tr-md rounded-bl-sm bg-[#d7811a]">
            <svg viewBox="0 0 24 24" className="h-6 w-6" fill="none" stroke="#fff1d8" strokeWidth="2">
              <rect x="1" y="8" width="22" height="14" rx="1.5" />
              <path d="M6 8V6Q6 2 12 2Q18 2 18 6V8M12 13V17" />
            </svg>
          </div>
        </div>
      </div>
      <div className="flex h-[63px] items-center justify-between pl-[11px] pr-[12px] pt-[33px] text-[#d93440]">
        <span>收盘获利</span>
        <span className="text-[33px] font-medium tracking-[-0.9px]">100.00%</span>
      </div>
      <div className="mt-[16px] flex h-[63px] items-center justify-between pl-[11px] pr-[12px] text-[#ea961e]">
        <span>平均成本</span>
        <span className="text-[33px] font-medium tracking-[-0.7px]">9.13</span>
      </div>
      <div className="ml-[11px] mt-[15px] flex h-[73px] w-[389px] shrink-0 rounded-md bg-[#f4f4f4] p-1">
        {[90, 70].map((n) => (
          <button
            key={n}
            onClick={() => setRange(n)}
            className={`flex-1 rounded-md pb-[2px] ${range === n ? "bg-white text-[#222]" : "text-[#999]"}`}
          >
            <span className="text-[36px] tracking-[1px]">{n}%</span>筹码
          </button>
        ))}
      </div>
      <div className="flex h-[63px] items-center justify-between pl-[11px] pr-[12px] pt-[34px] text-[#999]">
        <span>价格区间</span>
        <span className="text-[32px] font-medium tracking-[-1.2px] text-[#222]">7.95 – 9.76</span>
      </div>
      <div className="mt-[17px] flex h-[63px] items-center justify-between pl-[11px] pr-[12px] text-[#999]">
        <span>集中度</span>
        <span className="text-[33px] font-medium tracking-[-0.7px] text-[#222]">10.22%</span>
      </div>
      <div className="mt-[1px] flex h-[63px] items-center pl-[11px] text-[#999]">
        筹码分布说明
        <svg viewBox="0 0 28 28" className="ml-[12px] h-7 w-7" fill="none" stroke="#999" strokeWidth="2">
          <circle cx="14" cy="14" r="12.5" />
          <path d="M10 11.5Q10 7.5 14 7.5Q18 7.5 18 11Q18 13 14 15.5V18M14 19.5V21.5" />
        </svg>
      </div>
      <div className="mb-[6px] ml-[11px] mr-[12px] mt-auto flex justify-between">
        <div className="flex h-[69px] w-[203px] items-center gap-[10px] rounded-md bg-[#e9edfb] pl-[12px] text-[#3b62d4]">
          <svg viewBox="0 0 34 32" className="h-8 w-[34px]" fill="#3f6bdc">
            <path d="M0 0H17V4H0ZM0 7H25V11H0ZM0 14H34V18H0ZM0 21H25V25H0ZM0 28H17V32H0Z" />
          </svg>
          筹码选股
        </div>
        <div className="flex h-[69px] w-[98px] items-center justify-center rounded-md bg-[#f4f4f4] text-[36px] text-[#555]">
          关闭
        </div>
      </div>
    </aside>
  );
}

function ContentTabs() {
  return (
    <nav className="flex h-[84px] items-center overflow-hidden bg-white pt-[40px] text-[44px] leading-none text-[#666]">
      <svg viewBox="0 0 42 36" className="ml-[58px] mb-[3px] h-9 w-[42px] shrink-0">
        <path d="M9 0H33Q36 0 38 3L42 13Q42 16 40 18L23 35Q21 37 19 35L2 18Q0 16 0 13L4 3Q6 0 9 0Z" fill="#d3ab72" />
        <path d="M14 10H28" stroke="#fff" strokeWidth="3.5" />
      </svg>
      <span className="ml-[32px] w-[274px] shrink-0 text-[55px] font-bold italic leading-[44px] tracking-[4.2px] text-[#808080]">
        Level-2
      </span>
      <span className="w-[154px] shrink-0">看点</span>
      <span className="w-[166px] shrink-0 text-[51px] font-bold leading-[44px] text-[#262626]">资讯</span>
      <span className="w-[160px] shrink-0">盘口</span>
      <span className="w-[160px] shrink-0">资金</span>
      <span className="w-[44px] shrink-0 bg-linear-to-r from-[#aaa] to-white to-70% bg-clip-text text-transparent">社</span>
    </nav>
  );
}

function BottomItem({ label, className, children }: { label: string; className: string; children: ReactNode }) {
  return (
    <div className={`${className} flex shrink-0 flex-col items-center text-[32.5px] leading-none text-[#d2d2d2]`}>
      <svg viewBox="0 0 60 56" className="mb-[11px] mt-[21px] h-14 w-[60px]" fill="none" stroke="#d0d0d0" strokeWidth="2.8">
        {children}
      </svg>
      {label}
    </div>
  );
}

function BottomBar() {
  return (
    <footer className="relative h-[193px] overflow-hidden bg-[#242424]">
      <div className="flex">
        <div className="flex w-[248px] shrink-0 flex-col items-center">
          <svg viewBox="0 0 26 15" className="mt-[12px] h-[15px] w-[26px]" fill="#b0b0b0">
            <path d="M13 0L26 15H0Z" />
          </svg>
          <span className="mt-[19px] text-[32px] leading-none text-[#91796c]">造纸</span>
          <span className="mt-[25px] pl-[3px] text-[37px] leading-none text-[#2ce62c]">-0.86%</span>
        </div>
        <BottomItem label="下单" className="w-[208px]">
          <path d="M12 3H48Q53 3 53 8V43L42 55H12Q7 55 7 50V8Q7 3 12 3Z" />
          <path d="M14 16H45M14 23H45M14 30H45M14 37H36" />
        </BottomItem>
        <BottomItem label="诊股" className="w-[207px]">
          <path d="M19 4H41" strokeWidth="3.5" />
          <rect x="2" y="10" width="56" height="41" rx="6" />
          <path d="M10 53.5H21M39 53.5H50M20 30.5H40M30 20.5V40.5" />
        </BottomItem>
        <BottomItem label="删自选" className="w-[208px]">
          <rect x="8" y="8" width="44" height="44" />
          <path d="M18 30H42" />
        </BottomItem>
        <BottomItem label="功能" className="w-[209px]">
          <circle cx="30" cy="29" r="24" />
          <path d="M19 22H41M19 36H41" />
        </BottomItem>
      </div>
      <div className="absolute left-[327px] top-[162px] h-[11px] w-[418px] rounded-full bg-[#b1b1b1]" />
      <svg viewBox="865 2335 215 65" className="absolute bottom-0 right-0 h-[65px] w-[215px]">
        <defs>
          <filter id="smudge" x="-20%" y="-60%" width="140%" height="220%">
            <feGaussianBlur stdDeviation="2.5" />
          </filter>
        </defs>
        <rect x="867" y="2340" width="34" height="33" rx="8" fill="#e31c1f" stroke="#eee" strokeWidth="3" />
        <text x="871" y="2352" fontSize="6.5" fontWeight="700" fill="#ffc4c4">
          爱股票
        </text>
        <text x="914" y="2371" fontSize="32" fontWeight="700" fill="#dcdcdc" textLength="98">
          爱股票
        </text>
        <text x="1055" y="2370" fontSize="36" fontWeight="500" fill="#eee">
          2
        </text>
        <text x="870" y="2394" fontSize="20" fontWeight="500" fill="#e6e6e6" textLength="200">
          www.aigupiao.com
        </text>
        <g filter="url(#smudge)" fill="#242424">
          <path d="M901 2352L914 2350L922 2360L934 2360L940 2351L950 2352L955 2360L962 2358L970 2351L984 2351L992 2361L1000 2358L1008 2346L1062 2346L1062 2366L1070 2372L1056 2382L892 2383L866 2378L866 2374L897 2373Z" />
        </g>
      </svg>
    </footer>
  );
}

export default function App() {
  return (
    <div
      lang="zh-CN"
      className="h-[2400px] w-[1080px] overflow-hidden bg-white font-['Roboto','Noto_Sans_CJK_SC',sans-serif]"
    >
      <Header />
      <Quote />
      <News />
      <div className="h-[12px] bg-[#f4f4f4]" />
      <PeriodTabs />
      <AverageLegend />
      <main className="flex h-[1328px] pl-[12px]">
        <div className="w-[628px] pt-px">
          <PriceChart />
          <DateAxis />
          <Indicators />
        </div>
        <div className="ml-[15px]">
          <ChipPanel />
        </div>
      </main>
      <div className="h-[12px] bg-[#f3f3f3]" />
      <ContentTabs />
      <BottomBar />
    </div>
  );
}
